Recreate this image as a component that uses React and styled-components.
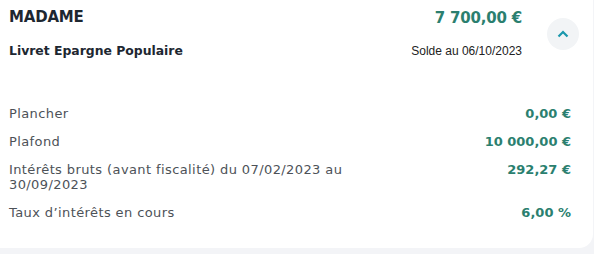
import React from 'react';
import styled, { createGlobalStyle } from 'styled-components';

const GlobalStyle = createGlobalStyle`
    html, body {
        margin: 0;
        padding: 0;
        background-color: #f3f4f7;
    }
`;

const colors = {
    text: '#1d2731',
    label: '#4d5258',
    teal: '#2b7f6f',
    chevron: '#1b98ad',
    buttonBg: '#f2f4f6',
};

const AccountCard = styled.div`
    width: 593px;
    height: 248px;
    box-sizing: border-box;
    background-color: #ffffff;
    border-bottom-right-radius: 14px;
    padding: 7px 22px 0 9px;
    font-family: "DejaVu Sans", sans-serif;
`;

const CardHeader = styled.div`
    display: flex;
    align-items: flex-start;
`;

const HeaderLeft = styled.div`
    flex: 1;
    display: flex;
    flex-direction: column;
    gap: 15px;
`;

const HolderName = styled.div`
    font-size: 15px;
    font-weight: 700;
    color: ${colors.text};
    letter-spacing: -0.2px;
    line-height: 20px;
`;

const ProductName = styled.div`
    font-size: 12.4px;
    font-weight: 700;
    color: ${colors.text};
    line-height: 18px;
`;

const HeaderRight = styled.div`
    display: flex;
    flex-direction: column;
    align-items: flex-end;
    gap: 15px;
    padding-top: 1px;
`;

const Balance = styled.div`
    font-size: 15px;
    font-weight: 700;
    color: ${colors.teal};
    letter-spacing: -0.2px;
    line-height: 20px;
`;

const BalanceDate = styled.div`
    font-family: "Liberation Sans", Arial, sans-serif;
    font-size: 12px;
    color: #222;
    line-height: 16px;
`;

const ToggleButton = styled.button`
    width: 32px;
    height: 32px;
    margin: 11px -8px 0 25px;
    border: none;
    border-radius: 50%;
    background-color: ${colors.buttonBg};
    display: flex;
    align-items: center;
    justify-content: center;
    padding: 0;
`;

const DetailList = styled.div`
    display: flex;
    flex-direction: column;
    gap: 13px;
    margin-top: 46px;
`;

const DetailRow = styled.div`
    display: flex;
    justify-content: space-between;
    align-items: flex-start;
`;

const DetailLabel = styled.div`
    max-width: 350px;
    font-size: 13px;
    letter-spacing: 0.4px;
    color: ${colors.label};
    line-height: 15px;
`;

const DetailValue = styled.div`
    font-size: 13px;
    font-weight: 700;
    color: ${colors.teal};
    line-height: 15px;
`;

const details = [
    { label: 'Plancher', value: '0,00 €' },
    { label: 'Plafond', value: '10 000,00 €' },
    { label: 'Intérêts bruts (avant fiscalité) du 07/02/2023 au 30/09/2023', value: '292,27 €' },
    { label: 'Taux d’intérêts en cours', value: '6,00 %' },
];

const App = () => (
    <>
        <GlobalStyle />
        <AccountCard>
            <CardHeader>
                <HeaderLeft>
                    <HolderName>MADAME</HolderName>
                    <ProductName>Livret Epargne Populaire</ProductName>
                </HeaderLeft>
                <HeaderRight>
                    <Balance>7 700,00 €</Balance>
                    <BalanceDate>Solde au 06/10/2023</BalanceDate>
                </HeaderRight>
                <ToggleButton aria-label="Réduire">
                    <svg width="12" height="8" viewBox="0 0 12 8">
                        <path d="M1.5 6.5 L6 2 L10.5 6.5" fill="none" stroke={colors.chevron} strokeWidth="2.2" />
                    </svg>
                </ToggleButton>
            </CardHeader>
            <DetailList>
                {details.map((item) => (
                    <DetailRow key={item.label}>
                        <DetailLabel>{item.label}</DetailLabel>
                        <DetailValue>{item.value}</DetailValue>
                    </DetailRow>
                ))}
            </DetailList>
        </AccountCard>
    </>
);

export default App;
